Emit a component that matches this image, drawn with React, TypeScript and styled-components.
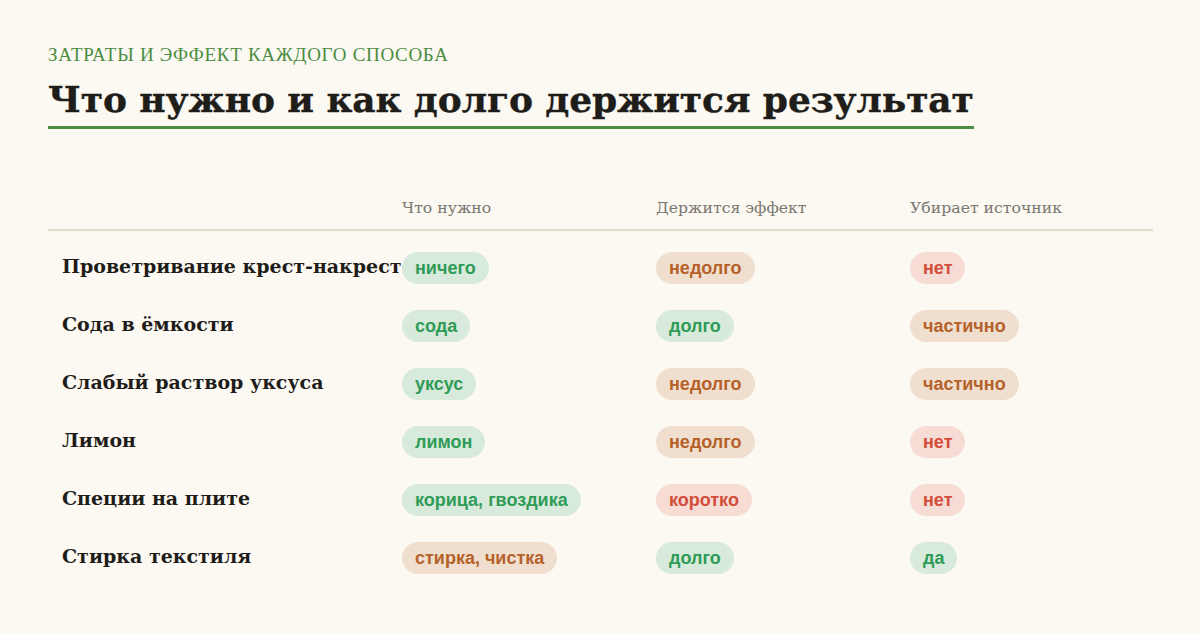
import React from 'react'
import styled, { createGlobalStyle } from 'styled-components'

const GlobalStyle = createGlobalStyle`
  html,
  body {
    margin: 0;
    padding: 0;
    background: #fbf9f2;
  }
`

const Page = styled.main`
  box-sizing: border-box;
  width: 1200px;
  height: 634px;
  padding: 43px 47px 0 48px;
  background: #fbf9f2;
  color: #1f1d1a;
`

const Eyebrow = styled.div`
  font-family: 'Liberation Serif', serif;
  font-size: 19px;
  line-height: 24px;
  letter-spacing: 0.7px;
  text-transform: uppercase;
  color: #4c8c42;
`

const Title = styled.h1`
  display: inline-block;
  margin: 10px 0 0;
  padding-bottom: 5px;
  border-bottom: 3px solid #4c8c42;
  font-family: 'DejaVu Serif', serif;
  font-size: 36px;
  line-height: 44px;
  font-weight: 700;
  letter-spacing: -0.1px;
  -webkit-text-stroke: 0.4px #1f1d1a;
`

const Table = styled.div`
  margin-top: 68px;
  display: grid;
  grid-template-columns: 354px 254px 254px 1fr;
`

const HeadCell = styled.div`
  margin-bottom: 8px;
  padding-bottom: 10px;
  border-bottom: 2px solid #dedbc8;
  font-family: 'DejaVu Serif', serif;
  font-size: 15.7px;
  line-height: 22px;
  color: #7a7670;
`

const Label = styled.div`
  display: flex;
  align-items: center;
  height: 58px;
  padding: 0 0 4px 14px;
  box-sizing: border-box;
  white-space: nowrap;
  font-family: 'DejaVu Serif', serif;
  font-size: 19px;
  font-weight: 700;
  color: #1f1d1a;
`

const Cell = styled.div`
  display: flex;
  align-items: center;
  height: 58px;
`

type Tone = 'good' | 'mid' | 'bad'

const tones: Record<Tone, { bg: string; fg: string }> = {
  good: { bg: '#d8eadb', fg: '#2f9b57' },
  mid: { bg: '#f0dfcf', fg: '#b5612a' },
  bad: { bg: '#f6dcd5', fg: '#d24d3a' },
}

const Pill = styled.span<{ $tone: Tone }>`
  display: inline-flex;
  align-items: center;
  height: 32px;
  padding: 0 13px;
  border-radius: 16px;
  background: ${(p) => tones[p.$tone].bg};
  color: ${(p) => tones[p.$tone].fg};
  font-family: 'Liberation Sans', Arial, sans-serif;
  font-size: 18px;
  font-weight: 700;
`

type Row = {
  name: string
  need: [string, Tone]
  lasts: [string, Tone]
  source: [string, Tone]
}

const rows: Row[] = [
  { name: 'Проветривание крест-накрест', need: ['ничего', 'good'], lasts: ['недолго', 'mid'], source: ['нет', 'bad'] },
  { name: 'Сода в ёмкости', need: ['сода', 'good'], lasts: ['долго', 'good'], source: ['частично', 'mid'] },
  { name: 'Слабый раствор уксуса', need: ['уксус', 'good'], lasts: ['недолго', 'mid'], source: ['частично', 'mid'] },
  { name: 'Лимон', need: ['лимон', 'good'], lasts: ['недолго', 'mid'], source: ['нет', 'bad'] },
  { name: 'Специи на плите', need: ['корица, гвоздика', 'good'], lasts: ['коротко', 'bad'], source: ['нет', 'bad'] },
  { name: 'Стирка текстиля', need: ['стирка, чистка', 'mid'], lasts: ['долго', 'good'], source: ['да', 'good'] },
]

const App = () => (
  <Page>
    <GlobalStyle />
    <Eyebrow>Затраты и эффект каждого способа</Eyebrow>
    <Title>Что нужно и как долго держится результат</Title>
    <Table>
      <HeadCell />
      <HeadCell>Что нужно</HeadCell>
      <HeadCell>Держится эффект</HeadCell>
      <HeadCell>Убирает источник</HeadCell>
      {rows.map((r) => (
        <React.Fragment key={r.name}>
          <Label>{r.name}</Label>
          <Cell>
            <Pill $tone={r.need[1]}>{r.need[0]}</Pill>
          </Cell>
          <Cell>
            <Pill $tone={r.lasts[1]}>{r.lasts[0]}</Pill>
          </Cell>
          <Cell>
            <Pill $tone={r.source[1]}>{r.source[0]}</Pill>
          </Cell>
        </React.Fragment>
      ))}
    </Table>
  </Page>
)

export default App
